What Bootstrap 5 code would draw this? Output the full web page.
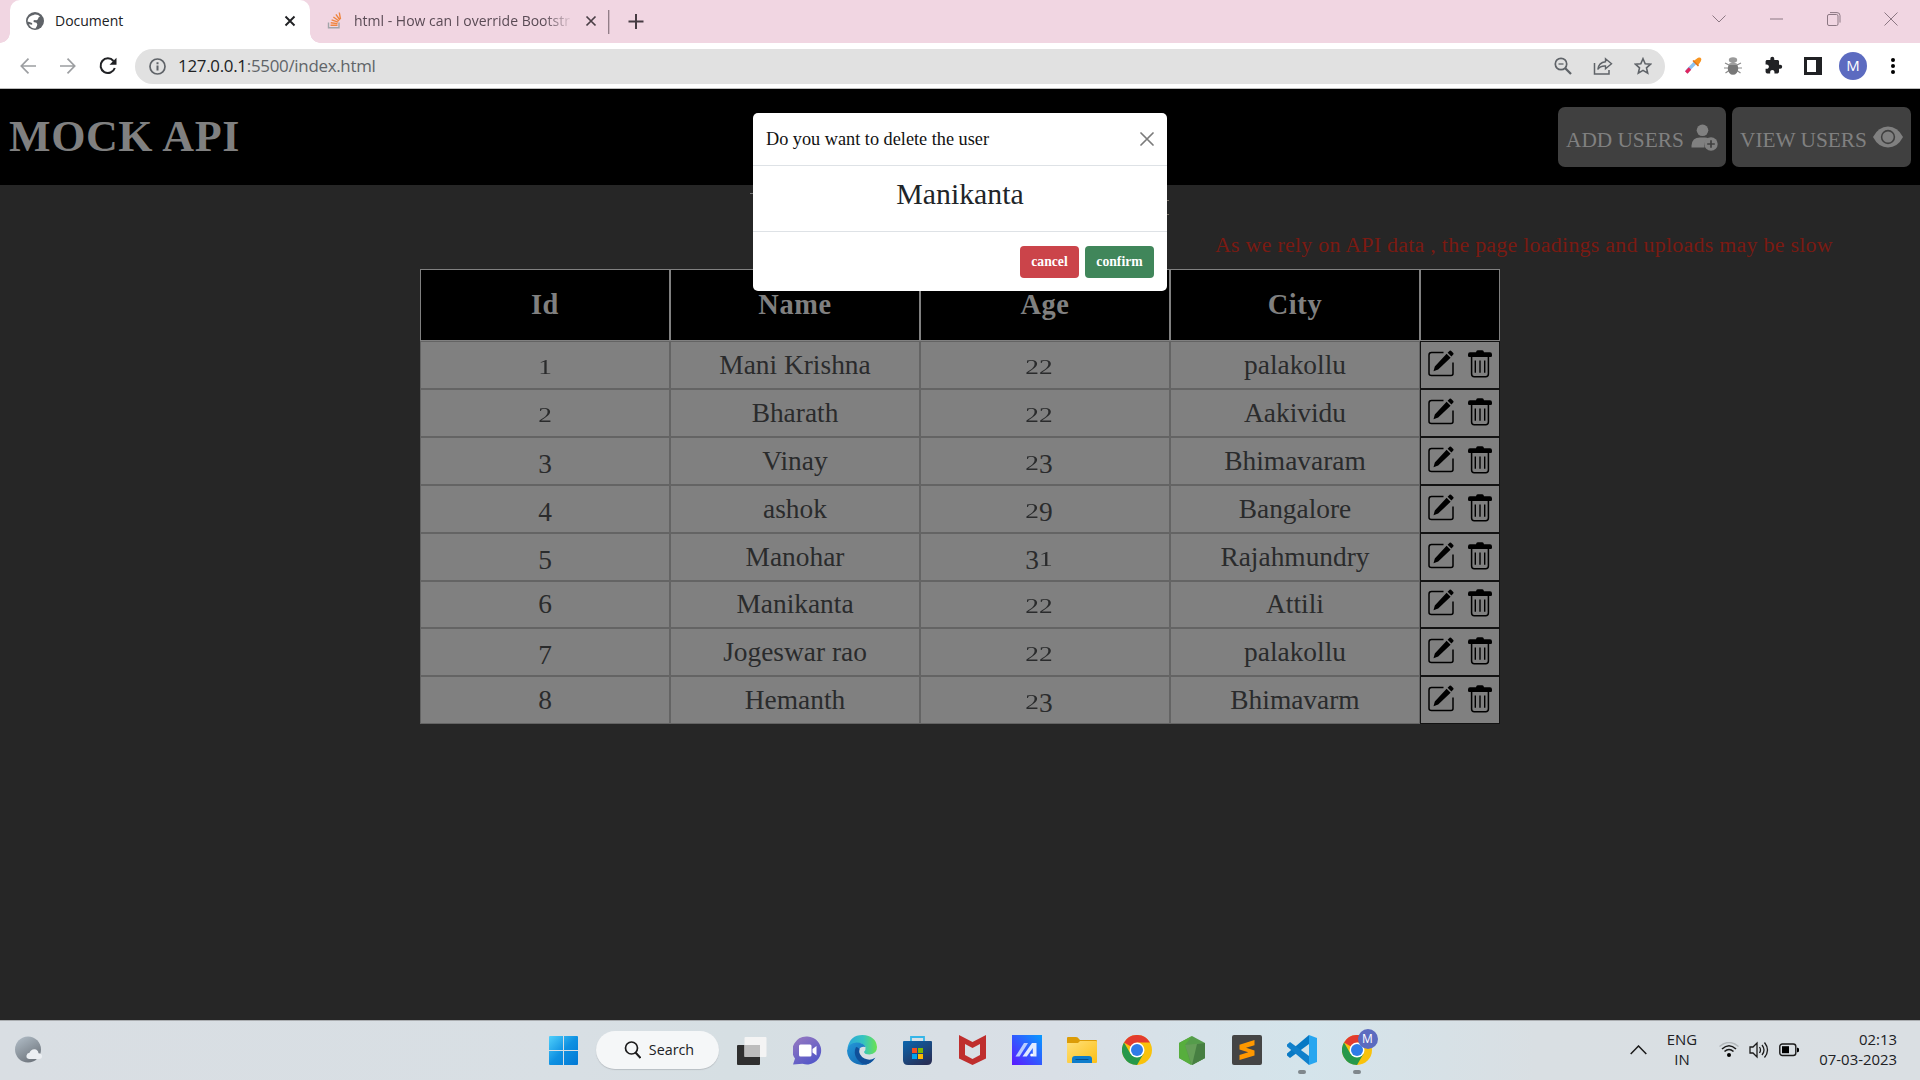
<!DOCTYPE html>
<html lang="en">
<head>
<meta charset="utf-8">
<title>Document</title>
<link href="https://cdn.jsdelivr.net/npm/bootstrap@5.3.0/dist/css/bootstrap.min.css" rel="stylesheet">
<style>
:root{--serif:Georgia,"Liberation Serif",serif;--ui:"Segoe UI","Open Sans","Noto Sans",sans-serif}
body{width:1920px;height:1080px;overflow:hidden;background:#262626;font-family:var(--ui);color:#202124}
svg{display:block;flex:none}
/* browser tabs */
.tabstrip{height:43px;background:#f1d6e2;padding-left:10px}
.tab-on{width:300px;height:43px;background:#fff;border-radius:10px 10px 0 0;padding:0 14px 2px 16px;position:relative}
.tab-on:before,.tab-on:after{content:"";position:absolute;bottom:0;width:10px;height:10px}
.tab-on:before{left:-10px;background:radial-gradient(circle at 0 0,transparent 9.5px,#fff 10px)}
.tab-on:after{right:-10px;background:radial-gradient(circle at 100% 0,transparent 9.5px,#fff 10px)}
.tab-off{width:298px;padding:0 11px 2px 17px}
.tab-text{font-size:14px;line-height:20px;white-space:nowrap}
.tab-fade{width:220px;color:#5a4b55;-webkit-mask-image:linear-gradient(90deg,#000 190px,transparent 220px)}
.win-btn{width:57.3px;display:flex;justify-content:center}
.toolbar-row{height:46px;background:#fff;border-bottom:1px solid #bcbcbc}
.tool-cell{width:40px;display:flex;justify-content:center}
.omnibox{width:1530px;height:35px;border-radius:18px;background:#e1e1e1;margin-top:1px;margin-left:7px}
.url-text{font-size:16.9px;letter-spacing:-.28px;line-height:24px;color:#606468;white-space:nowrap}
.avatar-dot{border-radius:50%;background:#5c6bc0;color:#fff;font-size:15px;display:flex;align-items:center;justify-content:center}
/* page */
.page-box{height:931px;position:relative;font-family:var(--serif)}
.site-head{height:96px;background:#000;padding:0 9px 0 9px}
.site-title{font-size:44px;font-weight:700;color:#808080;line-height:50px;letter-spacing:.6px}
.head-btn{height:60px;background:#404040;border-radius:7px;color:#808080;font-size:21.3px;padding:0 8px;border:0;white-space:nowrap;font-family:inherit}
.head-btn span{position:relative;top:4px}
.peek{height:22px;width:419px;margin:8px 0 0 750px}
.peek i{width:3px;height:1px;background:#777}
.peek i+i{height:15px;margin-top:7px;background:none;border:solid #776f66;border-width:1px 0}
.notice{color:#7b1a12;font-size:21.9px;letter-spacing:.27px;line-height:30px;width:620px;margin:15px 85px 0 auto;white-space:nowrap}
.users{border-collapse:separate;border-spacing:0;width:1080px;margin:9px 0 0 420px;table-layout:fixed;text-align:center;font-size:27.4px;line-height:30px;color:#2a2b2c}
.users th{height:72px;background:#000;border:1px solid #808080;color:#808080;font-size:28.4px;letter-spacing:.6px;padding:0 0 1px;vertical-align:middle}
.users td{height:48px;background:#808080;border:1px solid #646464;padding:0 0 1px;vertical-align:middle}
.users tr.short td{height:47px}
.users td.age{padding-right:12px}
.users td.acts{border-color:#121212;padding:0 7px 3px 7px}
.dg{display:inline-block;line-height:30px;transform-origin:50% 24px}
.dg-x{transform:scaleY(.73)}
.dg-d{transform:translateY(3px) scaleY(.96)}
/* dialog */
.dlg{position:absolute;left:753px;top:24px;width:414px;height:178px;background:#fff;border-radius:5px;color:#212529}
.dlg-head{height:53px;border-bottom:1px solid #dee2e6;padding:2px 13px 0 13px;font-size:18.25px;color:#111}
.dlg-main{height:66px;border-bottom:1px solid #dee2e6;font-size:29.8px;text-align:center;line-height:56px}
.dlg-foot{height:59px;padding:0 13px;gap:6px}
.dlg-foot .btn{height:32px;padding:0;font:700 13.7px/30px var(--serif);color:#fff;border:0;border-radius:4px}
.b-no{width:59px;background:#cb444a}.b-yes{width:69px;background:#40865a}
/* taskbar */
.taskbar{height:60px;border-top:1px solid #aaadb0;padding-bottom:1px;background:linear-gradient(90deg,#d9dee3,#d8dfe4 30%,#d6dfe3 38%,#d9dfe6 55%,#d4e4eb 68%,#d9dfe3 80%,#dadfe3)}
.search-pill{width:123px;height:38px;border-radius:19px;background:#f5f7f8;box-shadow:0 1px 1px #b9bfc4;margin:0 5.5px;padding-left:3px;font-size:14.3px;gap:8px}
.app{width:55px;height:58px;display:flex;align-items:center;justify-content:center;position:relative}
.app.run:after{content:"";position:absolute;bottom:5px;width:8px;height:4px;border-radius:2px;background:#7f878c}
.mini{position:absolute;left:28px;top:8px;width:20px;height:20px;font-size:12px}
.tray{font-size:14.9px;line-height:20px;white-space:nowrap}
.tray div{position:relative;top:-1px}
</style>
<script src="https://cdn.jsdelivr.net/npm/bootstrap@5.3.0/dist/js/bootstrap.bundle.min.js"></script>
</head>
<body>
<svg width="0" height="0" class="position-absolute">
<defs>
<symbol id="edit" viewBox="0 0 26 27"><path d="M15.500 2.500H3.500Q1 2.500 1 5v18.500q0 2 2.500 2h19.500q2 0 2-2V12.500" fill="none" stroke="#000" stroke-width="1.500"/><path d="M18.600 3.800l4 4L10.200 19.600 5.500 21.300 6.800 16.500zM19.600 2.800L21.600.8q.7-.6 1.400 0L25.300 3q.6.700 0 1.400l-1.900 2.200z"/></symbol>
<symbol id="trash" viewBox="0 0 24 28"><path d="M2 2.200h6Q8.300.3 9.800.3h4.400q1.500 0 1.800 1.900h6q2 0 2 2.200v1.400q0 1.200-1.200 1.200H1.200Q0 7 0 5.800V4.400Q0 2.200 2 2.200z"/><path d="M3.600 6.500V24q0 2.700 2.600 2.700h11.500q2.700 0 2.700-2.700V6.500" fill="none" stroke="#000" stroke-width="1.500"/><path d="M7.300 10.500v12.300M12 10.500v12.300M16.700 10.500v12.300" stroke="#000" stroke-width="1.400"/></symbol>
<symbol id="chrome" viewBox="0 0 30 30"><circle cx="15" cy="15" r="15" fill="#f9c20b"/><path d="M15 15L2 7.500A15 15 0 0 1 28 7.500H15z" fill="#e33b2e"/><path d="M2 7.500A15 15 0 0 0 15 30L21.500 18.700 15 15 8.500 18.700z" fill="#26984b"/><circle cx="15" cy="15" r="7.500" fill="#fff"/><circle cx="15" cy="15" r="6" fill="#2f7ce8"/></symbol>
</defs></svg>

<div class="tabstrip d-flex align-items-center">
  <div class="tab-on d-flex align-items-center">
    <svg width="18" height="18" viewBox="0 0 18 18"><circle cx="9" cy="9" r="9" fill="#5f6368"/><path d="M8.500 2.500q3.500-.5 5.500 2-2 .5-2 2.500-1 1.800-3 1-2.500.5-1 2.200 3-.2 3.300 2 0 2-1.800 4.300-4.500.2-6.800-4.500 0 0 2 .6 2.500.4 1.300-1.600-3-1.500-4.500-1.500.4-5.500 6.500-6.800-1.500 1.500.5-.2z" fill="#fff"/></svg>
    <div class="tab-text flex-grow-1" style="margin-left:11px">Document</div>
    <svg width="12" height="12" viewBox="0 0 12 12"><path d="M1.500 1.500l9 9M10.500 1.500l-9 9" stroke="#202124" stroke-width="1.900"/></svg>
  </div>
  <div class="tab-off d-flex align-items-center">
    <svg width="16" height="17" viewBox="0 0 16 17"><path d="M1.500 10.500v5.300h10.500v-5.300" fill="none" stroke="#a2a4a8" stroke-width="1.400"/><path d="M3.500 13.300h7M3.700 10.700l6.800.9M4.600 7.800l6.500 2.300M6.400 5l5.500 4M8.900 2.300l4 5.700M12.300.5l1.200 6.700" stroke="#ee8540" stroke-width="1.400"/></svg>
    <div class="tab-text tab-fade" style="margin-left:11px">html - How can I override Bootstr</div>
    <svg width="12" height="12" viewBox="0 0 12 12" style="margin-left:auto"><path d="M1.500 1.500l9 9M10.500 1.500l-9 9" stroke="#4a3f46" stroke-width="1.700"/></svg>
  </div>
  <svg width="40" height="26" viewBox="0 0 40 26"><path d="M.7 1v24" stroke="#8d7a84" stroke-width="1.300"/><path d="M20.500 12.500h15M28 5v15" stroke="#463b42" stroke-width="2"/></svg>
  <div class="d-flex align-items-center ms-auto" style="height:36px;margin-bottom:6px">
    <div class="win-btn"><svg width="14" height="8" viewBox="0 0 14 8"><path d="M.5.5L7 7 13.500.5" fill="none" stroke="#8c7883"/></svg></div>
    <div class="win-btn"><svg width="14" height="2"><path d="M0 1h13" stroke="#8c7883"/></svg></div>
    <div class="win-btn"><svg width="14" height="14" viewBox="0 0 14 14"><rect x=".5" y="2.500" width="10.500" height="11" rx="1.500" fill="none" stroke="#8c7883"/><path d="M3 .6h7q3 0 3 3v7" fill="none" stroke="#8c7883"/></svg></div>
    <div class="win-btn"><svg width="14" height="14"><path d="M.5.5l13 13M13.500.5l-13 13" stroke="#8c7883"/></svg></div>
  </div>
</div>

<div class="toolbar-row d-flex align-items-center">
  <div class="d-flex align-items-center" style="margin-left:8px">
    <div class="tool-cell"><svg width="16" height="16" viewBox="0 0 16 16"><path d="M16 8H1.500M8.500.7L1.300 8l7.200 7.300" fill="none" stroke="#9c9ea1" stroke-width="1.700"/></svg></div>
    <div class="tool-cell"><svg width="16" height="16" viewBox="0 0 16 16"><path d="M0 8h14.500M7.500.7L14.700 8l-7.200 7.300" fill="none" stroke="#9c9ea1" stroke-width="1.700"/></svg></div>
    <div class="tool-cell"><svg width="18" height="18" viewBox="0 0 18 18"><path d="M14.500 4A7.300 7.300 0 1 0 15.800 11" fill="none" stroke="#202124" stroke-width="2"/><path d="M17.500.8v7h-7z" fill="#202124"/></svg></div>
  </div>
  <div class="omnibox d-flex align-items-center">
    <svg width="17" height="17" viewBox="0 0 17 17" style="margin-left:14px"><circle cx="8.500" cy="8.500" r="7.500" fill="none" stroke="#5f6368" stroke-width="1.700"/><path d="M8.500 7.500v5M8.500 4.200v2" stroke="#5f6368" stroke-width="2"/></svg>
    <div class="url-text" style="margin-left:12px"><span style="color:#202124">127.0.0.1</span>:5500/index.html</div>
    <div class="d-flex ms-auto align-items-center" style="margin-right:2px">
      <div class="tool-cell"><svg width="18" height="18" viewBox="0 0 18 18"><circle cx="7" cy="7" r="5.700" fill="none" stroke="#5f6368" stroke-width="1.700"/><path d="M11 11l6 6" stroke="#5f6368" stroke-width="2.300"/><path d="M4.500 7h5" stroke="#5f6368" stroke-width="1.300"/></svg></div>
      <div class="tool-cell"><svg width="20" height="18" viewBox="0 0 20 18"><path d="M1.500 6v11H16v-4" fill="none" stroke="#5f6368" stroke-width="1.500"/><path d="M12.500 1.700l6 5-6 5V9Q7 8.700 4.800 12.500 5.500 5.500 12.500 4.700z" fill="none" stroke="#5f6368" stroke-width="1.400"/></svg></div>
      <div class="tool-cell"><svg width="18" height="18" viewBox="0 0 18 18"><path d="M9 1.700l2.200 5 5.400.5-4.100 3.600 1.200 5.400L9 13.400l-4.700 2.800 1.200-5.400L1.400 7.200l5.400-.5z" fill="none" stroke="#5f6368" stroke-width="1.600"/></svg></div>
    </div>
  </div>
  <div class="d-flex align-items-center" style="margin-left:8px">
    <div class="tool-cell"><svg width="17" height="17" viewBox="0 0 17 17"><path d="M10 6L3 13l-1.500 2.500" stroke="#8ec3ef" stroke-width="3.500"/><path d="M5 11.500l-3.800 4" stroke="#e0245e" stroke-width="3.400"/><path d="M8.500 4l4.500 4.500 3-4.500Q17 1.500 15.500.8 13.500 0 12 1.500z" fill="#f79421"/><path d="M8 3.500l5.500 5.500" stroke="#e37415" stroke-width="1.500"/></svg></div>
    <div class="tool-cell"><svg width="18" height="18" viewBox="0 0 18 18"><path d="M1 6l4 2M0 11h5M1.500 16L5 13.500M17 6l-4 2M18 11h-5M16.500 16L13 13.500" stroke="#8b8b8b" stroke-width="1.200"/><ellipse cx="9" cy="11.500" rx="5.200" ry="6.300" fill="#777"/><ellipse cx="9" cy="3" rx="4.200" ry="2.800" fill="#9a9a9a"/><path d="M5 7h8" stroke="#bbb" stroke-width="1.200"/></svg></div>
    <div class="tool-cell"><svg width="19" height="19" viewBox="0 0 24 24"><path fill="#202124" d="M20.500 11H19V7c0-1.100-.9-2-2-2h-4V3.500a2.500 2.500 0 0 0-5 0V5H4c-1.100 0-2 .9-2 2v3.800h1.500c1.500 0 2.700 1.200 2.700 2.700S5 16.200 3.500 16.200H2V20c0 1.100.9 2 2 2h3.800v-1.500c0-1.500 1.200-2.700 2.700-2.700s2.700 1.200 2.700 2.700V22H17c1.100 0 2-.9 2-2v-4h1.500a2.500 2.500 0 0 0 0-5z"/></svg></div>
    <div class="tool-cell"><svg width="18" height="18"><path d="M0 0h18v18H0zM3 3v12h9V3z" fill="#202124" fill-rule="evenodd"/></svg></div>
    <div class="tool-cell"><div class="avatar-dot" style="width:28px;height:28px">M</div></div>
    <div class="tool-cell"><svg width="4" height="18"><circle cx="2" cy="3" r="2"/><circle cx="2" cy="9" r="2"/><circle cx="2" cy="15" r="2"/></svg></div>
  </div>
</div>

<main class="page-box">
  <header class="site-head d-flex align-items-center justify-content-between">
    <div class="site-title">MOCK API</div>
    <div class="d-flex" style="gap:6px">
      <button class="head-btn d-flex align-items-center justify-content-between" style="width:168px"><span>ADD USERS</span><svg width="27" height="27" viewBox="0 0 27 27" style="margin-top:1px"><g fill="#808080"><circle cx="11.500" cy="6.300" r="5.800"/><path d="M.5 23.500v-2Q1 13.500 9 13.500h5q2 0 3.500.8-5 3-4 9.200z"/><circle cx="20" cy="20" r="6.700"/></g><path d="M20 16.200v7.600M16.200 20h7.600" stroke="#404040" stroke-width="1.700"/></svg></button>
      <button class="head-btn d-flex align-items-center justify-content-between" style="width:179px"><span>VIEW USERS</span><svg width="30" height="22" viewBox="0 0 30 22"><path d="M0 11Q5.500.5 15 .5T30 11Q24.500 21.500 15 21.500T0 11z" fill="#808080"/><circle cx="15" cy="11" r="7.200" fill="#404040"/><circle cx="15" cy="11" r="5.600" fill="#808080"/></svg></button>
    </div>
  </header>
  <div class="peek d-flex justify-content-between align-items-start"><i></i><i></i></div>
  <div class="notice">As we rely on API data , the page loadings and uploads may be slow</div>
  <table class="users">
    <colgroup><col style="width:250px"><col style="width:250px"><col style="width:250px"><col style="width:250px"><col style="width:80px"></colgroup>
    <thead><tr><th>Id</th><th>Name</th><th>Age</th><th>City</th><th></th></tr></thead>
    <tbody id="rows"></tbody>
  </table>

  <section class="dlg">
    <div class="dlg-head d-flex align-items-center justify-content-between"><span>Do you want to delete the user</span>
      <svg width="14" height="14" viewBox="0 0 14 14" style="margin-top:-3px"><path d="M1 1l12 12M13 1L1 13" stroke="#7b7b7b" stroke-width="1.700" stroke-linecap="round"/></svg></div>
    <div class="dlg-main">Manikanta</div>
    <div class="dlg-foot d-flex align-items-center justify-content-end"><button class="btn b-no">cancel</button><button class="btn b-yes">confirm</button></div>
  </section>
</main>

<footer class="taskbar d-flex align-items-center">
  <div style="width:535.5px;padding-left:15px"><svg width="28" height="28" viewBox="0 0 28 28"><defs><linearGradient id="mo" x2=".6" y2="1"><stop stop-color="#b4c0ca"/><stop offset="1" stop-color="#70777f"/></linearGradient></defs><circle cx="13" cy="13.500" r="13" fill="url(#mo)"/><path d="M14 23q-3-.5-2.500-3.500.5-2.500 3-2.700Q16 13 19.500 13.200q3.500.3 4 4Q27 17.500 27 20.300 27 23 24 23z" fill="#eceff3"/></svg></div>
  <div class="app"><svg width="29" height="29"><defs><linearGradient id="wi" x2="1" y2="1"><stop stop-color="#50d0fb"/><stop offset=".5" stop-color="#0f91e2"/><stop offset="1" stop-color="#0078d4"/></linearGradient></defs><path d="M1 0h13v14H0V1q0-1 1-1zM15 0h13q1 0 1 1v13H15zM0 15h14v14H1q-1 0-1-1zM15 15h14v13q0 1-1 1H15z" fill="url(#wi)"/></svg></div>
  <div class="search-pill d-flex align-items-center justify-content-center"><svg width="17" height="18" viewBox="0 0 17 18"><circle cx="7.500" cy="7" r="6" fill="none" stroke="#1b1b1b" stroke-width="1.700"/><path d="M11.500 11.500l5 5.500" stroke="#1b1b1b" stroke-width="2"/></svg>Search</div>
  <div class="app"><svg width="30" height="29"><rect x="0" y="9" width="23" height="20" rx="1" fill="#2f2f2f"/><rect x="7.500" y="1" width="22" height="20" rx="1" fill="#f4f4f4"/><path d="M7.500 9H23v12H7.500z" fill="#bdbdbd"/></svg></div>
  <div class="app"><svg width="29" height="29" viewBox="0 0 29 29"><defs><linearGradient id="te" x2=".6" y2="1"><stop stop-color="#9a7bc0"/><stop offset="1" stop-color="#5558c8"/></linearGradient></defs><path d="M14.500.5a14 14 0 1 1-5 27.200L0 28.500l2-6A14 14 0 0 1 14.500.5z" fill="url(#te)"/><rect x="6" y="8.500" width="12.500" height="12" rx="1.500" fill="#fff"/><path d="M19.500 13l4-3v9.500l-4-3z" fill="#fff"/></svg></div>
  <div class="app"><svg width="30" height="30" viewBox="0 0 30 30"><defs><linearGradient id="e1"><stop stop-color="#2aa5dc"/><stop offset=".55" stop-color="#35c4bf"/><stop offset="1" stop-color="#6be34e"/></linearGradient><linearGradient id="e2" y2="1"><stop stop-color="#2598d8"/><stop offset="1" stop-color="#0d5aa7"/></linearGradient></defs><path d="M.5 13Q3 0 15.500 0 29 .8 30 12q0 7-7.500 7.500-5 0-5.500-2.500 2-2 1.500-5Q14 6 7 9 2 11 0 14z" fill="url(#e1)"/><path d="M0 15.500Q1.500 8 9.500 7.500q7 0 9 4.500-5-1-6.500 3-1 7 6 10 6 2 10.500-2.500Q24 30 15.500 30 1 29 0 15.500z" fill="url(#e2)"/><path d="M9 12q-3 6 1 12 4 5 9 5.500 5-1.200 9-6.500-5 3-10.500.5-6.500-3.500-5-9.500-2-2-3.500-2z" fill="#10509a"/></svg></div>
  <div class="app"><svg width="29" height="29" viewBox="0 0 29 29"><defs><linearGradient id="st" x2=".7" y2="1"><stop stop-color="#0b66af"/><stop offset="1" stop-color="#273058"/></linearGradient></defs><path d="M8 7V1h13v6" fill="none" stroke="#35b6e8" stroke-width="1.800"/><path d="M0 6q0-1 1-1h27q1 0 1 1v18q0 5-5 5H5q-5 0-5-5z" fill="url(#st)"/><path d="M9 12h5v5H9z" fill="#f25022"/><path d="M15 12h5v5h-5z" fill="#7fba00"/><path d="M9 18h5v5H9z" fill="#00a4ef"/><path d="M15 18h5v5h-5z" fill="#ffb900"/></svg></div>
  <div class="app"><svg width="27" height="30" viewBox="0 0 27 30"><path d="M0 0l13.500 7L27 0v23.500L13.500 30 0 23.500zM6 9v11l7.500 4L21 20V9l-7.500 4z" fill="#bf2e2d" fill-rule="evenodd"/></svg></div>
  <div class="app"><svg width="30" height="30" viewBox="0 0 30 30"><defs><linearGradient id="ma" x1="1" x2="0" y2="1"><stop stop-color="#079bff"/><stop offset="1" stop-color="#5b18ff"/></linearGradient></defs><path d="M0 0h30v30H0z" fill="url(#ma)"/><path d="M3.500 21.500L12 8h4L7.500 21.500z" fill="#b9cdff"/><path d="M10.500 21.500L20 8h4.500v13.500h-3.700V13l-6 8.500z" fill="#e0eaff"/><circle cx="19.800" cy="20" r="1.600" fill="#fff"/></svg></div>
  <div class="app"><svg width="30" height="27" viewBox="0 0 30 27"><defs><linearGradient id="fo" x2="1" y2="1"><stop stop-color="#ffe07a"/><stop offset="1" stop-color="#fcbf16"/></linearGradient></defs><path d="M0 1q0-1 1-1h8q2 0 3 2l1 1h16q1 0 1 1v6H0z" fill="#dc9c07"/><path d="M0 6h11l2-2h16q1 0 1 1v20q0 1-1 1H1q-1 0-1-1z" fill="url(#fo)"/><path d="M5 26v-4q0-3 3-3h14q3 0 3 3v4z" fill="#0e7ccb"/><path d="M8.500 22.500h13" stroke="#084f8c"/></svg></div>
  <div class="app"><svg width="30" height="30"><use href="#chrome"/></svg></div>
  <div class="app"><svg width="26" height="29" viewBox="0 0 26 29"><path d="M13 0l13 7v15l-13 7L0 22V7z" fill="#559c4b"/><path d="M0 7L13 0 6 9l6 20L0 22z" fill="#57ae3d"/><path d="M6 9l20-2v15l-13 7z" fill="#659e58"/><path d="M18 8l8-1v15l-13 7z" fill="#477f42"/></svg></div>
  <div class="app"><svg width="30" height="30" viewBox="0 0 30 30"><rect width="30" height="30" rx="2" fill="#454545"/><path d="M7.500 9.800L22.500 5v5.200l-8.500 2.600 8.500 2.700v5L7.500 25v-5l8.800-2.700-8.800-2.700z" fill="#ff9800"/></svg></div>
  <div class="app run"><svg width="30" height="30" viewBox="0 0 30 30"><path d="M22 0v9L3 23 0 20.500v-2z" fill="#0879c4"/><path d="M22 30v-9L3 7 0 9.500v2z" fill="#1180cb"/><path d="M22 0l8 3v24l-8 3z" fill="#27a6f0"/></svg></div>
  <div class="app run"><svg width="30" height="30"><use href="#chrome"/></svg><span class="avatar-dot mini">M</span></div>
  <div class="tray d-flex align-items-center ms-auto" style="margin-right:23px">
    <svg width="17" height="10" viewBox="0 0 17 10"><path d="M.7 9l7.800-8 7.800 8" fill="none" stroke="#1b1b1b" stroke-width="1.500"/></svg>
    <div class="text-center" style="width:70px;margin-right:2px">ENG<br>IN</div>
    <svg width="20" height="16" viewBox="0 0 20 16"><circle cx="10" cy="13" r="2"/><path d="M5.500 9.500q4.500-4 9 0M3 7q7-6.500 14 0" fill="none" stroke="#1b1b1b" stroke-width="1.600"/><path d="M.5 4.500q9.500-8 19 0" fill="none" stroke="#b3b8bb" stroke-width="1.400"/></svg>
    <svg width="20" height="18" viewBox="0 0 20 18" style="margin-left:10px"><path d="M1 6h3l4-4v14l-4-4H1z" fill="none" stroke="#1b1b1b" stroke-width="1.300"/><path d="M10.500 6q2 3 0 6M13 4q4 5 0 10M15.500 1.500q6 7.500 0 15" fill="none" stroke="#1b1b1b" stroke-width="1.300"/></svg>
    <svg width="20" height="14" viewBox="0 0 20 14" style="margin-left:10px"><rect x=".8" y="1" width="16" height="11.500" rx="2.500" fill="none" stroke="#1b1b1b" stroke-width="1.400"/><rect x="3" y="3.200" width="7" height="7"/><path d="M18 4.500l2 1v3l-2 1z"/></svg>
    <div class="text-end" style="width:98px">02:13<br>07-03-2023</div>
  </div>
</footer>
<script>
const users=[[1,'Mani Krishna',22,'palakollu'],[2,'Bharath',22,'Aakividu'],[3,'Vinay',23,'Bhimavaram'],[4,'ashok',29,'Bangalore'],[5,'Manohar',31,'Rajahmundry'],[6,'Manikanta',22,'Attili'],[7,'Jogeswar rao',22,'palakollu'],[8,'Hemanth',23,'Bhimavarm']];
// old-style numerals: 0-2 sit at x-height, 3 4 5 7 9 descend
const digits=n=>String(n).replace(/./g,d=>`<span class="dg ${'012'.includes(d)?'dg-x':'34579'.includes(d)?'dg-d':''}">${d}</span>`);
document.getElementById('rows').innerHTML=users.map(([i,n,a,c])=>`<tr class="${i===6?'short':''}"><td>${digits(i)}</td><td>${n}</td><td class="age">${digits(a)}</td><td>${c}</td><td class="acts"><div class="d-flex justify-content-between"><svg width="26" height="27"><use href="#edit"/></svg><svg width="24" height="28"><use href="#trash"/></svg></div></td></tr>`).join('');
</script>
</body>
</html>
